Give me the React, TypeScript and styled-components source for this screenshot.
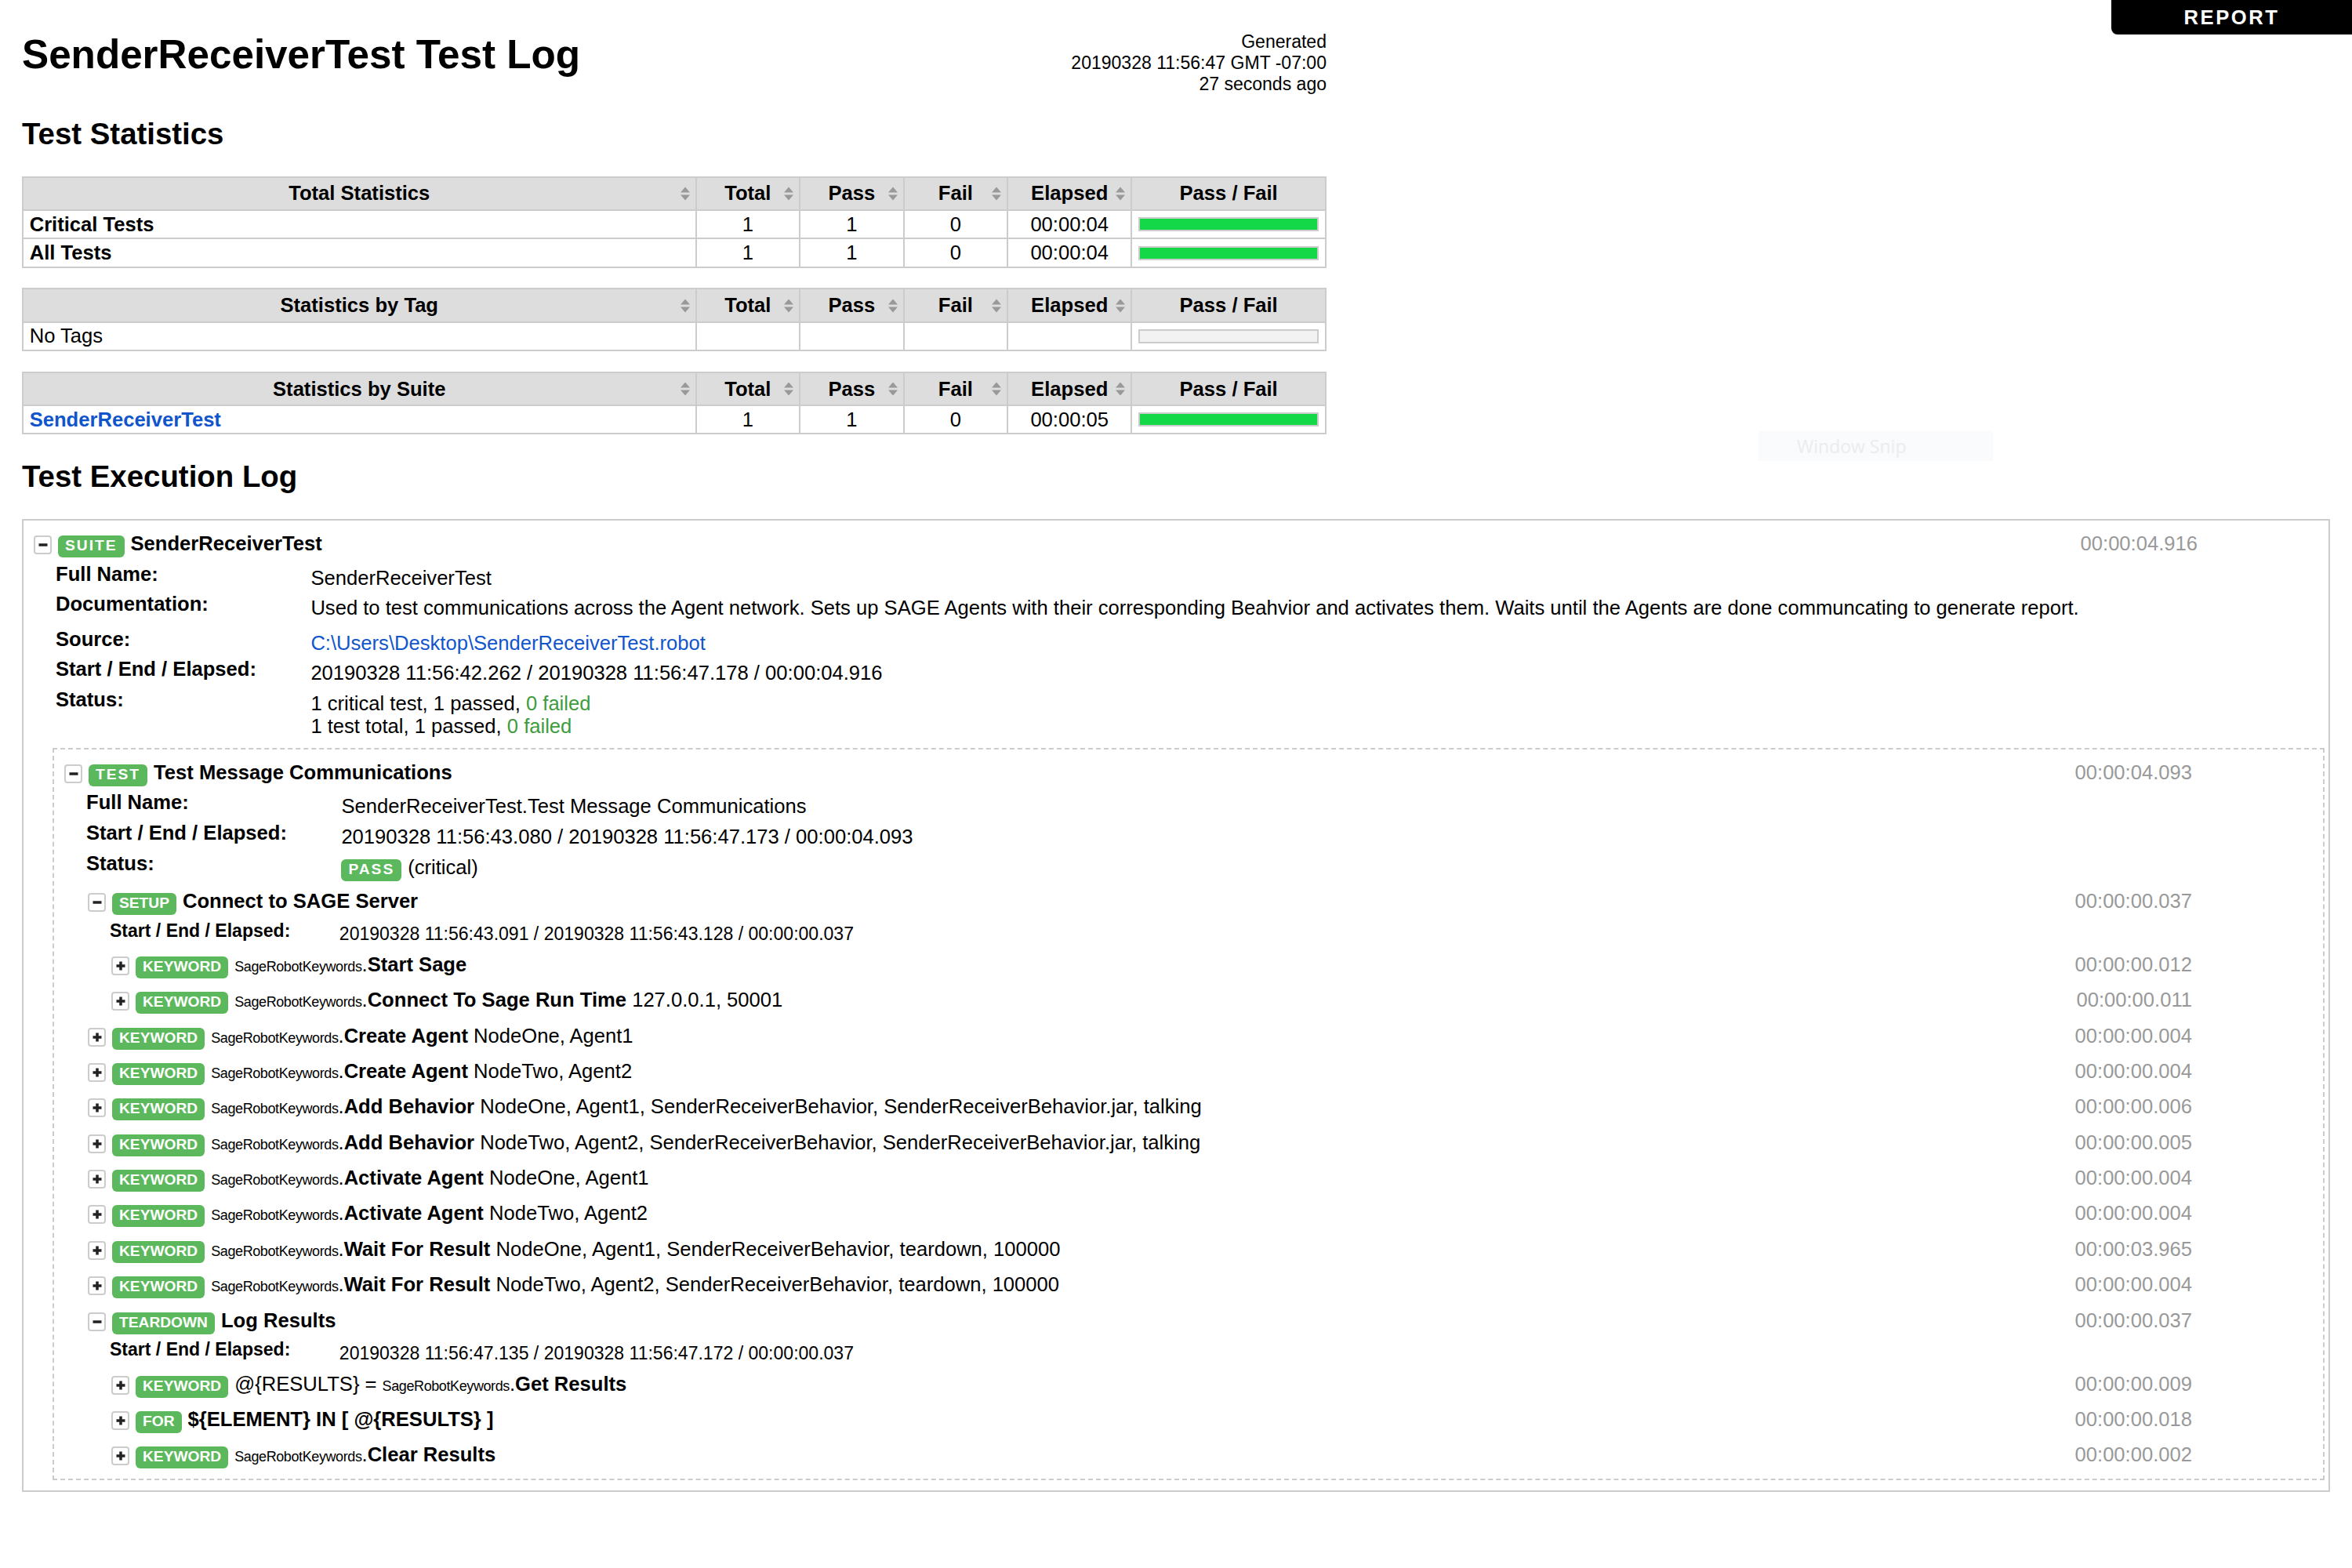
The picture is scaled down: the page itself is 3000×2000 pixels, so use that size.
import React from "react";
import styled, { createGlobalStyle } from "styled-components";

const GlobalStyle = createGlobalStyle`
  body {
    margin: 16px;
    padding: 12px;
    background: #fff;
    color: #000;
    font-family: "Liberation Sans", Arial, Helvetica, sans-serif;
    font-size: 25.6px;
  }
  a {
    color: #1155cc;
    text-decoration: none;
  }
`;

const Page = styled.div``;

const ReportLink = styled.a`
  position: fixed;
  top: 0;
  right: 0;
  width: 307px;
  padding: 7.68px 0;
  background: #000;
  color: #fff !important;
  font-weight: bold;
  letter-spacing: 2.56px;
  text-align: center;
  border-bottom-left-radius: 8px;
`;

const Header = styled.header`
  display: flex;
  justify-content: space-between;
  align-items: flex-start;
  width: 1664px;
  height: 76.8px;
  margin: 12px 0;
`;

const Title = styled.h1`
  margin: 0;
  font-size: 51.2px;
  font-weight: bold;
`;

const Generated = styled.div`
  font-size: 23.04px;
  text-align: right;
  white-space: nowrap;
`;

const SectionTitle = styled.h2`
  margin: 31.9px 0;
  font-size: 38.4px;
  font-weight: bold;
`;

/* ---------- statistics tables ---------- */

const StatTable = styled.table`
  width: 1664px;
  border-collapse: collapse;
  empty-cells: show;
  margin-bottom: 25.6px;
`;

const HeadCell = styled.th<{ $w?: number }>`
  position: relative;
  width: ${({ $w }) => ($w ? `${$w}px` : "auto")};
  padding: 5.9px 7.68px;
  border: 2px solid #ccc;
  background: #ddd;
  font-weight: bold;
  text-align: center;
  white-space: nowrap;
`;

const Cell = styled.td<{ $center?: boolean }>`
  padding: 2.56px 7.68px;
  border: 2px solid #ccc;
  text-align: ${({ $center }) => ($center ? "center" : "left")};
  vertical-align: middle;
  white-space: nowrap;
`;

const SortArrow = styled.svg`
  position: absolute;
  right: 6px;
  top: 50%;
  transform: translateY(-50%);
`;

const StatName = styled.span<{ $bold?: boolean }>`
  font-weight: ${({ $bold }) => ($bold ? "bold" : "normal")};
`;

const StatLink = styled.a`
  font-weight: bold;
`;

const Graph = styled.div`
  box-sizing: border-box;
  width: 100%;
  height: 18px;
  border: 2px solid #ccc;
  background: #f2f2f2;
`;

const PassBar = styled.div`
  height: 100%;
  background: #14d848;
`;

/* ---------- execution log ---------- */

const ElementBox = styled.div<{ $test?: boolean }>`
  border: 2px ${({ $test }) => ($test ? "dashed" : "solid")} #ccc;
  padding: 8px 5px 6px 13px;
  margin: ${({ $test }) => ($test ? "8.5px 0 7px" : "0")};
`;

const KeywordBox = styled.div`
  padding-left: 6px;
`;

const ElementHeader = styled.div`
  display: flex;
  align-items: baseline;
  padding: 6.7px 162px 6.7px 0;
  white-space: nowrap;
`;

const ToggleBox = styled.span`
  align-self: center;
  flex: none;
  display: flex;
  align-items: center;
  justify-content: center;
  box-sizing: border-box;
  width: 23px;
  height: 24px;
  margin-right: 8px;
  border: 2px solid #ccc;
  border-radius: 4px;
  background: #fff;
`;

const Label = styled.span<{ $spaced?: boolean }>`
  display: inline-block;
  flex: none;
  padding: 3px 9px 5px;
  margin-right: 8px;
  line-height: 20px;
  font-size: 19.2px;
  font-weight: bold;
  letter-spacing: ${({ $spaced }) => ($spaced ? "2px" : "0")};
  color: #fff;
  background: #5cb85c;
  border-radius: 6px;
`;

const HeaderName = styled.span``;

const KeywordName = styled.b``;

const LibName = styled.span`
  font-size: 18px;
  letter-spacing: -0.4px;
`;

const Elapsed = styled.span`
  margin-left: auto;
  padding-left: 24px;
  color: #999;
`;

const Metadata = styled.div<{ $small?: boolean }>`
  display: grid;
  grid-template-columns: 12.71em 1fr;
  margin-left: 28px;
  font-size: ${({ $small }) => ($small ? "23.04px" : "25.6px")};
`;

const MetaLabel = styled.div`
  font-weight: bold;
  white-space: nowrap;
`;

const MetaValue = styled.div<{ $extra?: boolean }>`
  padding-top: 0.195em;
  padding-bottom: ${({ $extra }) => ($extra ? "calc(0.18em + 6px)" : "0.18em")};
  white-space: nowrap;
`;

const PassText = styled.span`
  color: #3d9c3d;
`;

const Children = styled.div`
  margin-left: 24px;
`;

const SnipGhost = styled.div`
  position: absolute;
  left: 2243px;
  top: 550px;
  width: 299px;
  height: 38px;
  box-sizing: border-box;
  padding-left: 49px;
  background: rgba(244, 247, 251, 0.5);
  color: #ececee;
  font-family: "Open Sans", "Noto Sans", sans-serif;
  font-size: 23px;
  line-height: 38px;
`;

/* ---------- data ---------- */

type StatRow = {
  name: string;
  kind: "bold" | "plain" | "link";
  total?: number;
  pass?: number;
  fail?: number;
  elapsed?: string;
};

const totalStats: StatRow[] = [
  { name: "Critical Tests", kind: "bold", total: 1, pass: 1, fail: 0, elapsed: "00:00:04" },
  { name: "All Tests", kind: "bold", total: 1, pass: 1, fail: 0, elapsed: "00:00:04" },
];
const tagStats: StatRow[] = [{ name: "No Tags", kind: "plain" }];
const suiteStats: StatRow[] = [
  { name: "SenderReceiverTest", kind: "link", total: 1, pass: 1, fail: 0, elapsed: "00:00:05" },
];

type Kw = {
  type: "KEYWORD" | "SETUP" | "TEARDOWN" | "FOR";
  assign?: string;
  lib?: string;
  name: string;
  args?: string;
  elapsed: string;
  times?: string;
  children?: Kw[];
};

const LIB = "SageRobotKeywords";

const testKeywords: Kw[] = [
  {
    type: "SETUP",
    name: "Connect to SAGE Server",
    elapsed: "00:00:00.037",
    times: "20190328 11:56:43.091 / 20190328 11:56:43.128 / 00:00:00.037",
    children: [
      { type: "KEYWORD", lib: LIB, name: "Start Sage", elapsed: "00:00:00.012" },
      { type: "KEYWORD", lib: LIB, name: "Connect To Sage Run Time", args: "127.0.0.1, 50001", elapsed: "00:00:00.011" },
    ],
  },
  { type: "KEYWORD", lib: LIB, name: "Create Agent", args: "NodeOne, Agent1", elapsed: "00:00:00.004" },
  { type: "KEYWORD", lib: LIB, name: "Create Agent", args: "NodeTwo, Agent2", elapsed: "00:00:00.004" },
  {
    type: "KEYWORD",
    lib: LIB,
    name: "Add Behavior",
    args: "NodeOne, Agent1, SenderReceiverBehavior, SenderReceiverBehavior.jar, talking",
    elapsed: "00:00:00.006",
  },
  {
    type: "KEYWORD",
    lib: LIB,
    name: "Add Behavior",
    args: "NodeTwo, Agent2, SenderReceiverBehavior, SenderReceiverBehavior.jar, talking",
    elapsed: "00:00:00.005",
  },
  { type: "KEYWORD", lib: LIB, name: "Activate Agent", args: "NodeOne, Agent1", elapsed: "00:00:00.004" },
  { type: "KEYWORD", lib: LIB, name: "Activate Agent", args: "NodeTwo, Agent2", elapsed: "00:00:00.004" },
  {
    type: "KEYWORD",
    lib: LIB,
    name: "Wait For Result",
    args: "NodeOne, Agent1, SenderReceiverBehavior, teardown, 100000",
    elapsed: "00:00:03.965",
  },
  {
    type: "KEYWORD",
    lib: LIB,
    name: "Wait For Result",
    args: "NodeTwo, Agent2, SenderReceiverBehavior, teardown, 100000",
    elapsed: "00:00:00.004",
  },
  {
    type: "TEARDOWN",
    name: "Log Results",
    elapsed: "00:00:00.037",
    times: "20190328 11:56:47.135 / 20190328 11:56:47.172 / 00:00:00.037",
    children: [
      { type: "KEYWORD", assign: "@{RESULTS} =", lib: LIB, name: "Get Results", elapsed: "00:00:00.009" },
      { type: "FOR", name: "${ELEMENT} IN [ @{RESULTS} ]", elapsed: "00:00:00.018" },
      { type: "KEYWORD", lib: LIB, name: "Clear Results", elapsed: "00:00:00.002" },
    ],
  },
];

/* ---------- components ---------- */

const SortIcon = () => (
  <SortArrow width="14" height="18" viewBox="0 0 14 18">
    <path d="M7 0.5 L13 7.5 H1 Z M1 10.5 H13 L7 17.5 Z" fill="#999" />
  </SortArrow>
);

const StatsTable = ({ title, rows }: { title: string; rows: StatRow[] }) => (
  <StatTable>
    <thead>
      <tr>
        <HeadCell>
          {title}
          <SortIcon />
        </HeadCell>
        <HeadCell $w={115.2}>
          Total
          <SortIcon />
        </HeadCell>
        <HeadCell $w={115.2}>
          Pass
          <SortIcon />
        </HeadCell>
        <HeadCell $w={115.2}>
          Fail
          <SortIcon />
        </HeadCell>
        <HeadCell $w={140.8}>
          Elapsed
          <SortIcon />
        </HeadCell>
        <HeadCell $w={230.4}>Pass / Fail</HeadCell>
      </tr>
    </thead>
    <tbody>
      {rows.map((r) => {
        const pct = r.total ? (100 * (r.pass ?? 0)) / r.total : 0;
        return (
          <tr key={r.name}>
            <Cell>
              {r.kind === "link" ? (
                <StatLink href="#">{r.name}</StatLink>
              ) : (
                <StatName $bold={r.kind === "bold"}>{r.name}</StatName>
              )}
            </Cell>
            <Cell $center>{r.total}</Cell>
            <Cell $center>{r.pass}</Cell>
            <Cell $center>{r.fail}</Cell>
            <Cell $center>{r.elapsed}</Cell>
            <Cell>
              <Graph>{r.total ? <PassBar style={{ width: `${pct}%` }} /> : null}</Graph>
            </Cell>
          </tr>
        );
      })}
    </tbody>
  </StatTable>
);

const Toggle = ({ open }: { open: boolean }) => (
  <ToggleBox>
    <svg width="12" height="12" viewBox="0 0 12 12">
      <rect x="0.5" y="4.25" width="11" height="3.5" fill="#222" />
      {!open && <rect x="4.25" y="0.5" width="3.5" height="11" fill="#222" />}
    </svg>
  </ToggleBox>
);

const Keyword = ({ kw }: { kw: Kw }) => {
  const open = !!kw.children;
  return (
    <KeywordBox>
      <ElementHeader>
        <Toggle open={open} />
        <Label>{kw.type}</Label>
        <HeaderName>
          {kw.assign && <span>{kw.assign} </span>}
          {kw.lib && (
            <>
              <LibName>{kw.lib}</LibName>.
            </>
          )}
          <KeywordName>{kw.name}</KeywordName>
          {kw.args && <span> {kw.args}</span>}
        </HeaderName>
        <Elapsed>{kw.elapsed}</Elapsed>
      </ElementHeader>
      {open && (
        <>
          <Metadata $small>
            <MetaLabel>Start / End / Elapsed:</MetaLabel>
            <MetaValue>{kw.times}</MetaValue>
          </Metadata>
          <Children>
            {kw.children!.map((c, i) => (
              <Keyword key={i} kw={c} />
            ))}
          </Children>
        </>
      )}
    </KeywordBox>
  );
};

const TestElement = () => (
  <ElementBox $test>
    <ElementHeader>
      <Toggle open />
      <Label $spaced>TEST</Label>
      <KeywordName>Test Message Communications</KeywordName>
      <Elapsed>00:00:04.093</Elapsed>
    </ElementHeader>
    <Metadata>
      <MetaLabel>Full Name:</MetaLabel>
      <MetaValue>SenderReceiverTest.Test Message Communications</MetaValue>
      <MetaLabel>Start / End / Elapsed:</MetaLabel>
      <MetaValue>20190328 11:56:43.080 / 20190328 11:56:47.173 / 00:00:04.093</MetaValue>
      <MetaLabel>Status:</MetaLabel>
      <MetaValue>
        <Label $spaced>PASS</Label>(critical)
      </MetaValue>
    </Metadata>
    <Children>
      {testKeywords.map((kw, i) => (
        <Keyword key={i} kw={kw} />
      ))}
    </Children>
  </ElementBox>
);

const SuiteElement = () => (
  <ElementBox>
    <ElementHeader>
      <Toggle open />
      <Label $spaced>SUITE</Label>
      <KeywordName>SenderReceiverTest</KeywordName>
      <Elapsed>00:00:04.916</Elapsed>
    </ElementHeader>
    <Metadata>
      <MetaLabel>Full Name:</MetaLabel>
      <MetaValue>SenderReceiverTest</MetaValue>
      <MetaLabel>Documentation:</MetaLabel>
      <MetaValue $extra>
        Used to test communications across the Agent network. Sets up SAGE Agents with their corresponding
        Beahvior and activates them. Waits until the Agents are done communcating to generate report.
      </MetaValue>
      <MetaLabel>Source:</MetaLabel>
      <MetaValue>
        <a href="#">C:\Users\Desktop\SenderReceiverTest.robot</a>
      </MetaValue>
      <MetaLabel>Start / End / Elapsed:</MetaLabel>
      <MetaValue>20190328 11:56:42.262 / 20190328 11:56:47.178 / 00:00:04.916</MetaValue>
      <MetaLabel>Status:</MetaLabel>
      <MetaValue>
        1 critical test, 1 passed, <PassText>0 failed</PassText>
        <br />1 test total, 1 passed, <PassText>0 failed</PassText>
      </MetaValue>
    </Metadata>
    <Children>
      <TestElement />
    </Children>
  </ElementBox>
);

export default function App() {
  return (
    <Page>
      <GlobalStyle />
      <ReportLink href="#">REPORT</ReportLink>
      <Header>
        <Title>SenderReceiverTest Test Log</Title>
        <Generated>
          Generated
          <br />
          20190328 11:56:47 GMT -07:00
          <br />
          27 seconds ago
        </Generated>
      </Header>
      <SectionTitle>Test Statistics</SectionTitle>
      <StatsTable title="Total Statistics" rows={totalStats} />
      <StatsTable title="Statistics by Tag" rows={tagStats} />
      <StatsTable title="Statistics by Suite" rows={suiteStats} />
      <SectionTitle>Test Execution Log</SectionTitle>
      <SuiteElement />
      <SnipGhost>Window Snip</SnipGhost>
    </Page>
  );
}
